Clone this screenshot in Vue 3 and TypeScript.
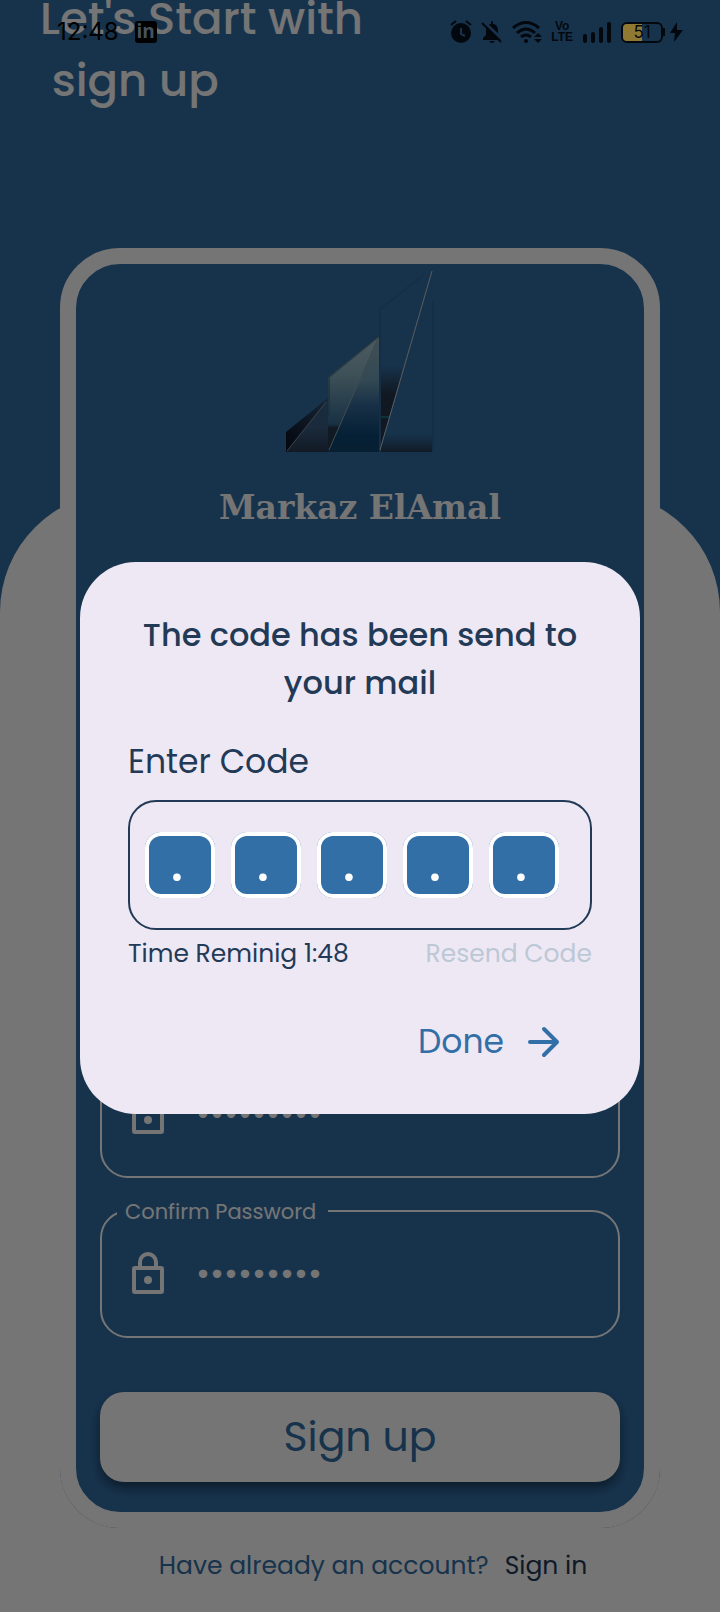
<script setup lang="ts">
import { ref } from 'vue'

const code = ref<string[]>(['.', '.', '.', '.', '.'])
const password = ref('markaz123')
const confirmation = ref('markaz123')
const remaining = ref('1:48')
const batteryLevel = ref(51)
</script>

<template>
  <div class="page">
    <header class="intro">
      <h1>Let's Start with<br />&nbsp;sign up</h1>
    </header>

    <main class="card">
      <div class="card-body">
        <svg class="logo" viewBox="0 0 148 182" aria-hidden="true">
          <defs>
            <linearGradient id="low" x1="0" y1="0" x2="0" y2="1">
              <stop offset="0" stop-color="#36618f" />
              <stop offset="0.55" stop-color="#3b5d83" />
              <stop offset="1" stop-color="#273850" />
            </linearGradient>
            <linearGradient id="lowDark" x1="1" y1="0" x2="0" y2="1">
              <stop offset="0" stop-color="#305378" />
              <stop offset="1" stop-color="#080e1c" />
            </linearGradient>
            <linearGradient id="midLeft" x1="0" y1="0" x2="0" y2="1">
              <stop offset="0" stop-color="#a8c5cf" />
              <stop offset="0.3" stop-color="#8db5c3" />
              <stop offset="0.76" stop-color="#356b94" />
              <stop offset="0.79" stop-color="#253a4e" />
              <stop offset="1" stop-color="#253a4e" />
            </linearGradient>
            <linearGradient id="midRight" x1="0" y1="0" x2="0" y2="1">
              <stop offset="0" stop-color="#8cafbb" />
              <stop offset="0.38" stop-color="#6f9fb6" />
              <stop offset="0.6" stop-color="#33699a" />
              <stop offset="0.87" stop-color="#0b4474" />
              <stop offset="1" stop-color="#11446c" />
            </linearGradient>
            <linearGradient id="highLeft" x1="0" y1="0" x2="0" y2="1">
              <stop offset="0.52" stop-color="#336fa7" />
              <stop offset="0.68" stop-color="#253648" />
              <stop offset="1" stop-color="#253648" />
            </linearGradient>
            <linearGradient id="highRight" x1="0" y1="0" x2="0" y2="1">
              <stop offset="0.9" stop-color="#336fa7" />
              <stop offset="1" stop-color="#263b51" />
            </linearGradient>
          </defs>
          <path d="M0 162 42 128V182H0Z" fill="url(#lowDark)" />
          <path d="M0 182 41 131 42 128V182Z" fill="url(#low)" />
          <path d="M1 181 40 132" stroke="#8a9099" stroke-width="1" />
          <path d="M42 107 93 66 42 182Z" fill="url(#midLeft)" />
          <path d="M42 182 93 66V182Z" fill="url(#midRight)" />
          <path d="M43 146V107L93 66" fill="none" stroke="#356681" stroke-width="2" opacity="0.6" />
          <path d="M43 180 92 68" stroke="#8ba7b1" stroke-width="1" />
          <path d="M93 38 146 1 93 182Z" fill="url(#highLeft)" />
          <path d="M93 182 146 1 148 30V182Z" fill="url(#highRight)" />
          <path d="M94 182V39L138 5M147 30V182" fill="none" stroke="#2e659a" stroke-width="2" />
          <path d="M93 147H103" stroke="#1e6e7c" stroke-width="2" />
          <path d="M94 180 146 1" stroke="#c4cacf" stroke-width="1" />
        </svg>
        <p class="brand">Markaz ElAmal</p>

        <form class="form" @submit.prevent>
          <div class="field">
            <svg class="lock" viewBox="0 0 32 42" aria-hidden="true">
              <path d="M8 16V10a8 8 0 0 1 16 0v6" />
              <rect x="2" y="16" width="28" height="24" rx="1" />
              <circle cx="16" cy="28" r="4" />
            </svg>
            <input v-model="password" type="password" aria-label="Password" />
          </div>
          <div class="field">
            <label for="confirm">Confirm Password</label>
            <svg class="lock" viewBox="0 0 32 42" aria-hidden="true">
              <path d="M8 16V10a8 8 0 0 1 16 0v6" />
              <rect x="2" y="16" width="28" height="24" rx="1" />
              <circle cx="16" cy="28" r="4" />
            </svg>
            <input id="confirm" v-model="confirmation" type="password" />
          </div>
          <button class="submit" type="submit">Sign up</button>
        </form>
      </div>
    </main>

    <footer class="signin">
      <span>Have already an account?</span>
      <a href="#">Sign in</a>
    </footer>

    <div class="scrim">
      <section class="dialog" role="dialog" aria-modal="true" aria-labelledby="dialog-title">
        <h2 id="dialog-title">The code has been send to your mail</h2>
        <p class="prompt">Enter Code</p>
        <div class="code">
          <span v-for="(_, i) in code" :key="i" class="cell">
            <input v-model="code[i]" type="text" maxlength="1" :aria-label="`Digit ${i + 1}`" />
          </span>
        </div>
        <div class="status">
          <span>Time Reminig {{ remaining }}</span>
          <button class="resend" type="button" disabled>Resend Code</button>
        </div>
        <button class="done" type="button">
          Done
          <svg viewBox="0 0 40 40" aria-hidden="true">
            <path d="M6 20H33M20 7 33 20 20 33" />
          </svg>
        </button>
      </section>
    </div>

    <div class="system">
      <span class="clock">12:48</span>
      <span class="linkedin">in</span>
      <div class="indicators">
        <svg width="22" height="24" viewBox="0 0 22 24" aria-hidden="true">
          <circle cx="11" cy="13" r="10" fill="currentColor" />
          <path d="M1 5 6 1M21 5 16 1" stroke="currentColor" stroke-width="2" />
          <path d="M11 8v6l4 2" fill="none" stroke="#18324b" stroke-width="2" />
        </svg>
        <svg width="22" height="24" viewBox="0 0 22 24" aria-hidden="true">
          <path d="M2 20V18l3-3v-5c0-3 2-6 5-6V2q1-2 2 0v2c3 0 5 3 5 6v5l3 3v2ZM8 21h6q-3 4-6 0Z" fill="currentColor" />
          <path d="M3 2 22 20" stroke="#18324b" stroke-width="3" />
          <path d="M1 3 20 22" stroke="currentColor" stroke-width="2" />
        </svg>
        <svg width="30" height="24" viewBox="0 0 30 24" aria-hidden="true">
          <path d="M1 8Q14-3 27 8M5 13Q14 5 23 13M9 17Q14 13 19 17" fill="none" stroke="currentColor" stroke-width="3" />
          <circle cx="14" cy="21" r="2" fill="currentColor" />
          <path d="M22 17 26 13 30 17ZM22 19 26 23 30 19Z" fill="currentColor" />
        </svg>
        <span class="volte">Vo<br />LTE</span>
        <svg width="30" height="22" viewBox="0 0 30 22" aria-hidden="true">
          <path d="M3 20V15M11 20V13M19 20V8M27 20V3" stroke="currentColor" stroke-width="4" stroke-linecap="round" />
        </svg>
        <span class="battery">
          <span class="cell-body">
            <span class="charge" :style="{ width: batteryLevel + '%' }"></span>
            <span class="level">{{ batteryLevel }}</span>
          </span>
          <svg width="20" height="22" viewBox="0 0 20 22" aria-hidden="true">
            <path d="M1 7v8" stroke="currentColor" stroke-width="2" />
            <path d="M14 1 7 12h5L11 21 20 9h-6Z" fill="currentColor" />
          </svg>
        </span>
      </div>
    </div>
  </div>
</template>

<style>
body {
  margin: 0;
}
</style>

<style scoped>
.page {
  position: relative;
  display: flex;
  flex-direction: column;
  box-sizing: border-box;
  min-height: 100vh;
  overflow: hidden;
  background: #336fa7;
  font-family: Poppins, Inter, "Open Sans", sans-serif;
  isolation: isolate;
}
.page::before {
  content: "";
  position: absolute;
  inset: 492px 0 0;
  z-index: -1;
  border-radius: 120px 120px 0 0;
  background: #fff;
}
h1, h2, p {
  margin: 0;
  font-weight: 500;
}
button {
  padding: 0;
  border: 0;
  background: none;
  font-family: inherit;
}
input {
  min-width: 0;
  box-sizing: border-box;
  outline: 0;
  font-family: inherit;
}
.intro {
  margin: -12px 40px 136px;
}
h1 {
  color: #fff;
  font-size: 45px;
  line-height: 62px;
}
.card {
  display: flex;
  flex: 1;
  margin: 0 60px;
  border-radius: 60px;
  background: #336fa7;
}
.card-body {
  display: flex;
  flex: 1;
  flex-direction: column;
  align-items: center;
  min-width: 0;
  padding: 6px 24px 30px;
  border: 16px solid #fff;
  border-radius: 60px;
}
.logo {
  width: 148px;
  height: 182px;
}
.brand {
  margin-top: 36px;
  color: #fff;
  font: bold 33px/40px "DejaVu Serif", serif;
}
.form {
  display: flex;
  flex-direction: column;
  gap: 32px;
  width: 100%;
  margin-top: auto;
}
.field {
  position: relative;
  display: flex;
  align-items: center;
  gap: 32px;
  box-sizing: border-box;
  height: 128px;
  padding: 0 30px 2px;
  border: 2px solid #fff;
  border-radius: 28px;
}
.field label {
  position: absolute;
  top: -15px;
  left: 15px;
  padding: 0 12px 0 8px;
  background: #336fa7;
  color: #fff;
  font-size: 21px;
  line-height: 30px;
}
.field input {
  flex: 1;
  padding: 0;
  border: 0;
  background: none;
  color: #fff;
  font-size: 34px;
}
.lock {
  width: 32px;
  height: 42px;
  fill: none;
  stroke: #fff;
  stroke-width: 4;
}
.lock circle {
  fill: #fff;
  stroke: none;
}
.submit {
  height: 90px;
  margin-top: 22px;
  padding-bottom: 2px;
  border-radius: 24px;
  background: #fff;
  box-shadow: 0 6px 12px rgba(0, 0, 0, 0.45);
  color: #336fa7;
  font-size: 41px;
}
.signin {
  display: flex;
  justify-content: center;
  gap: 16px;
  padding: 20px 0 28px 26px;
  color: #336fa7;
  font-size: 25px;
  line-height: 36px;
}
.signin a {
  color: #223a56;
  text-decoration: none;
}
.scrim {
  position: absolute;
  inset: 0;
  display: flex;
  align-items: center;
  padding: 64px 80px 0;
  background: rgba(0, 0, 0, 0.54);
}
.dialog {
  display: flex;
  flex: 1;
  flex-direction: column;
  padding: 49px 48px 48px;
  border-radius: 56px;
  background: #eee8f4;
  color: #223a56;
}
h2 {
  font-size: 32px;
  line-height: 48px;
  text-align: center;
}
.prompt {
  margin: 31px 0 14px;
  font-size: 33px;
  font-weight: 400;
  line-height: 48px;
}
.code {
  display: flex;
  align-items: center;
  gap: 16px;
  box-sizing: border-box;
  height: 130px;
  padding: 0 15px;
  border: 2px solid #223a56;
  border-radius: 28px;
}
.cell {
  display: flex;
  width: 70px;
  height: 66px;
  border-radius: 16px;
  background: #336fa7;
}
.cell input {
  width: 100%;
  padding: 0 6px 6px 0;
  border: 4px solid #fff;
  border-radius: 16px;
  background: none;
  color: #fff;
  font: bold 50px/52px Lato, sans-serif;
  text-align: center;
}
.status {
  display: flex;
  justify-content: space-between;
  margin-top: 6px;
  font-size: 25px;
  line-height: 36px;
}
.resend {
  color: #bcc8d6;
  font-size: 25px;
  line-height: 36px;
}
.done {
  display: flex;
  align-items: center;
  align-self: flex-end;
  gap: 20px;
  height: 48px;
  margin: 46px 28px 0 0;
  color: #336fa7;
  font-size: 33px;
}
.done svg {
  width: 40px;
  height: 40px;
  fill: none;
  stroke: currentColor;
  stroke-width: 4;
  stroke-linecap: round;
  stroke-linejoin: round;
}
.system {
  position: absolute;
  inset: 0 0 auto;
  display: flex;
  align-items: center;
  height: 64px;
  padding: 0 37px 0 57px;
  color: #03080e;
}
.clock {
  color: #000;
  font: 24px/32px Inter, sans-serif;
}
.linkedin {
  width: 22px;
  height: 22px;
  margin-left: 16px;
  border-radius: 3px;
  background: #000;
  color: #46525d;
  font: bold 19px/21px "Open Sans", sans-serif;
  text-align: center;
}
.indicators {
  display: flex;
  align-items: center;
  gap: 9px;
  margin-left: auto;
}
.volte {
  font: bold 12px/11px "Liberation Sans", sans-serif;
  text-align: center;
}
.battery {
  display: flex;
  align-items: center;
}
.cell-body {
  position: relative;
  box-sizing: border-box;
  width: 42px;
  height: 21px;
  border: 2px solid currentColor;
  border-radius: 6px;
  overflow: hidden;
}
.charge {
  display: block;
  height: 100%;
  background: #8f7933;
}
.level {
  position: absolute;
  inset: 0;
  font: 17px/17px Inter, sans-serif;
  text-align: center;
}
</style>
